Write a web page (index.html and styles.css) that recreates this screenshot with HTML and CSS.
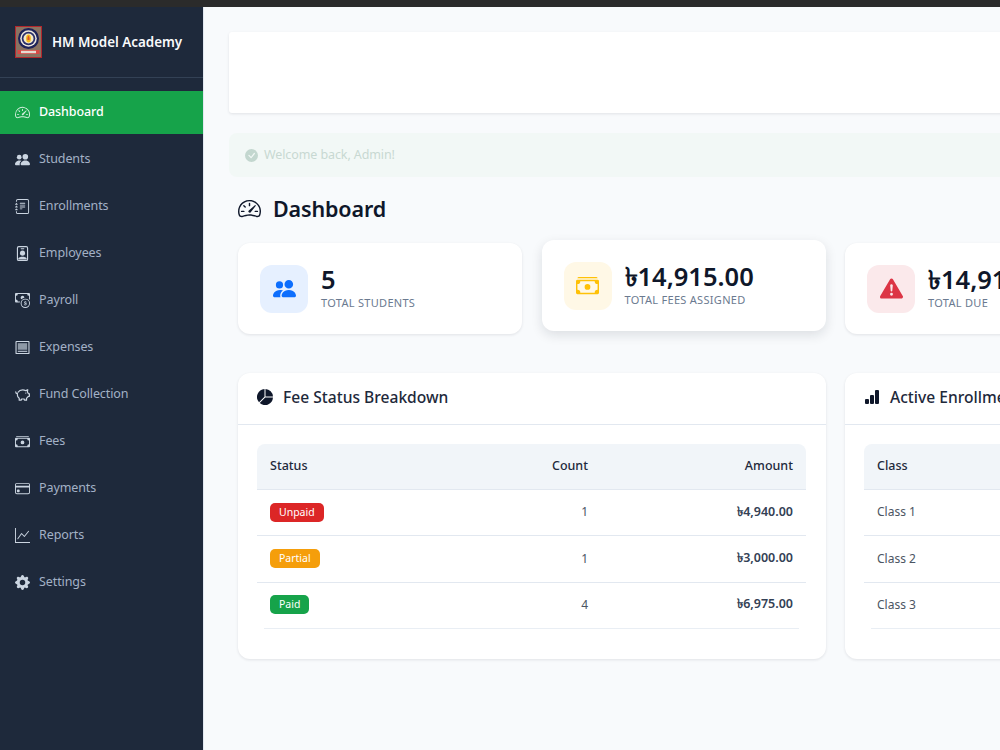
FILE: index.html
```html
<!DOCTYPE html>
<html lang="en">
<head>
<meta charset="utf-8">
<title>HM Model Academy</title>
<link rel="stylesheet" href="styles.css">
</head>
<body>
<svg class="defs" width="0" height="0" aria-hidden="true">
  <symbol id="i-speed" viewBox="0 0 16 16"><path d="M8 4a.5.5 0 0 1 .5.5V6a.5.5 0 0 1-1 0V4.5A.5.5 0 0 1 8 4zM3.732 5.732a.5.5 0 0 1 .707 0l.915.914a.5.5 0 1 1-.708.708l-.914-.915a.5.5 0 0 1 0-.707zM2 10a.5.5 0 0 1 .5-.5h1.586a.5.5 0 0 1 0 1H2.500A.5.5 0 0 1 2 10zm9.500 0a.5.5 0 0 1 .5-.5h1.500a.5.5 0 0 1 0 1H12a.5.5 0 0 1-.5-.5zm.754-4.246a.389.389 0 0 0-.527-.02L7.547 9.310a.91.91 0 1 0 1.302 1.258l3.434-4.297a.389.389 0 0 0-.029-.518z"/><path fill-rule="evenodd" d="M0 10a8 8 0 1 1 15.547 2.661c-.442 1.253-1.845 1.602-2.932 1.250C11.309 13.488 9.475 13 8 13c-1.474 0-3.310.488-4.615.911-1.087.352-2.490.003-2.932-1.250A7.988 7.988 0 0 1 0 10zm8-7a7 7 0 0 0-6.603 9.329c.203.575.923.876 1.680.630C4.397 12.533 6.358 12 8 12s3.604.532 4.923.960c.757.245 1.477-.056 1.680-.631A7 7 0 0 0 8 3z"/></symbol>
  <symbol id="i-people" viewBox="0 0 16 16"><path d="M7 14s-1 0-1-1 1-4 5-4 5 3 5 4-1 1-1 1H7zm4-6a3 3 0 1 0 0-6 3 3 0 0 0 0 6z"/><path d="M5.216 14A2.238 2.238 0 0 1 5 13c0-1.355.68-2.750 1.936-3.720A6.325 6.325 0 0 0 5 9c-4 0-5 3-5 4s1 1 1 1h4.216z"/><path d="M4.500 8a2.500 2.500 0 1 0 0-5 2.500 2.500 0 0 0 0 5z"/></symbol>
  <symbol id="i-journal" viewBox="0 0 16 16"><path d="M5 10.500a.5.5 0 0 1 .5-.5h2a.5.5 0 0 1 0 1h-2a.5.5 0 0 1-.5-.5zm0-2a.5.5 0 0 1 .5-.5h5a.5.5 0 0 1 0 1h-5a.5.5 0 0 1-.5-.5zm0-2a.5.5 0 0 1 .5-.5h5a.5.5 0 0 1 0 1h-5a.5.5 0 0 1-.5-.5zm0-2a.5.5 0 0 1 .5-.5h5a.5.5 0 0 1 0 1h-5a.5.5 0 0 1-.5-.5z"/><path d="M3 0h10a2 2 0 0 1 2 2v12a2 2 0 0 1-2 2H3a2 2 0 0 1-2-2v-1h1v1a1 1 0 0 0 1 1h10a1 1 0 0 0 1-1V2a1 1 0 0 0-1-1H3a1 1 0 0 0-1 1v1H1V2a2 2 0 0 1 2-2z"/><path d="M1 5v-.5a.5.5 0 0 1 1 0V5h.5a.5.5 0 0 1 0 1h-2a.5.5 0 0 1 0-1H1zm0 3v-.5a.5.5 0 0 1 1 0V8h.5a.5.5 0 0 1 0 1h-2a.5.5 0 0 1 0-1H1zm0 3v-.5a.5.5 0 0 1 1 0v.5h.5a.5.5 0 0 1 0 1h-2a.5.5 0 0 1 0-1H1z"/></symbol>
  <symbol id="i-badge" viewBox="0 0 16 16"><path fill-rule="evenodd" d="M4 0h8a2 2 0 0 1 2 2v12a2 2 0 0 1-2 2H4a2 2 0 0 1-2-2V2a2 2 0 0 1 2-2zm0 1.200a.8.8 0 0 0-.8.8v12a.8.8 0 0 0 .8.8h8a.8.8 0 0 0 .8-.8V2a.8.8 0 0 0-.8-.8H4z"/><rect x="6" y="2.300" width="4" height="1.100" rx=".5"/><circle cx="8" cy="7.600" r="2.700"/><path d="M3.500 13.200C4.400 12 6 11.500 8 11.500s3.600.5 4.500 1.700V14a.5.5 0 0 1-.5.5H4a.5.5 0 0 1-.5-.5v-.8z"/></symbol>
  <symbol id="i-coin" viewBox="0 0 16 16"><path fill-rule="evenodd" d="M11 15a4 4 0 1 0 0-8 4 4 0 0 0 0 8zm5-4a5 5 0 1 1-10 0 5 5 0 0 1 10 0z"/><path d="M9.438 11.944c.047.596.518 1.060 1.363 1.116v.44h.375v-.443c.875-.061 1.386-.529 1.386-1.207 0-.618-.39-.936-1.090-1.100l-.296-.07v-1.200c.376.043.614.248.671.532h.658c-.047-.575-.54-1.024-1.329-1.073V8.500h-.375v.45c-.747.073-1.255.522-1.255 1.158 0 .562.378.92 1.007 1.066l.248.061v1.272c-.384-.058-.639-.27-.696-.563h-.668zm1.360-1.354c-.369-.085-.569-.26-.569-.522 0-.294.216-.514.572-.578v1.100h-.003zm.432.746c.449.104.655.272.655.569 0 .339-.257.571-.709.614v-1.195l.054.012z"/><path d="M1 0a1 1 0 0 0-1 1v8a1 1 0 0 0 1 1h4.083c.058-.344.145-.678.258-1H3a2 2 0 0 0-2-2V3a2 2 0 0 0 2-2h10a2 2 0 0 0 2 2v3.528c.38.34.717.728 1 1.154V1a1 1 0 0 0-1-1H1z"/><path d="M9.998 5.083 10 5a2 2 0 1 0-3.132 1.650 5.982 5.982 0 0 1 3.130-1.567z"/></symbol>
  <symbol id="i-news" viewBox="0 0 16 16"><path fill-rule="evenodd" d="M1.500 1h13a1 1 0 0 1 1 1v12a1 1 0 0 1-1 1h-13a1 1 0 0 1-1-1V2a1 1 0 0 1 1-1zm.2 1.200v11.600h12.600V2.200H1.700z"/><rect x="3" y="3.400" width="10" height="7" opacity=".65"/><rect x="3" y="11.500" width="10" height="1.100"/></symbol>
  <symbol id="i-piggy" viewBox="0 0 16 16"><path fill="none" stroke="currentColor" stroke-width="1.300" stroke-linejoin="round" stroke-linecap="round" d="M3.200 5.600C4.300 3.900 6.200 3 8.200 3c1.300 0 2.300.3 3.200.9l2.200-1-.4 2.500c.5.5.8 1 1 1.600l1.200.3v2.500l-1.400.4c-.4.7-1 1.300-1.700 1.700V14h-2.200l-.3-1.200H7l-.3 1.200H4.500v-2c-1.300-1-2-2.300-2-3.800 0-.4 0-.8.1-1.200C1.500 7 .8 6.300.8 5.200"/><circle cx="11.500" cy="6.500" r=".7"/></symbol>
  <symbol id="i-cash" viewBox="0 0 16 16"><path d="M1 3a1 1 0 0 1 1-1h12a1 1 0 0 1 1 1H1zm7 8a2 2 0 1 0 0-4 2 2 0 0 0 0 4z"/><path fill-rule="evenodd" d="M0 5a1 1 0 0 1 1-1h14a1 1 0 0 1 1 1v8a1 1 0 0 1-1 1H1a1 1 0 0 1-1-1V5zm3 0a2 2 0 0 1-2 2v4a2 2 0 0 1 2 2h10a2 2 0 0 1 2-2V7a2 2 0 0 1-2-2H3z"/></symbol>
  <symbol id="i-card" viewBox="0 0 16 16"><path fill-rule="evenodd" d="M0 4a2 2 0 0 1 2-2h12a2 2 0 0 1 2 2v8a2 2 0 0 1-2 2H2a2 2 0 0 1-2-2V4zm2-1a1 1 0 0 0-1 1v1h14V4a1 1 0 0 0-1-1H2zm13 4H1v5a1 1 0 0 0 1 1h12a1 1 0 0 0 1-1V7z"/><path d="M2 10a1 1 0 0 1 1-1h1a1 1 0 0 1 1 1v1a1 1 0 0 1-1 1H3a1 1 0 0 1-1-1v-1z"/></symbol>
  <symbol id="i-graph" viewBox="0 0 16 16"><path d="M0 0h1v15h15v1H0V0Zm14.817 3.113a.5.5 0 0 1 .07.704l-4.500 5.500a.5.5 0 0 1-.74.037L7.060 6.767l-3.656 5.027a.5.5 0 0 1-.808-.588l4-5.500a.5.5 0 0 1 .758-.06l2.609 2.610 4.150-5.073a.5.5 0 0 1 .704-.07Z"/></symbol>
  <symbol id="i-gear" viewBox="0 0 16 16"><path d="M9.405 1.050c-.413-1.400-2.397-1.400-2.810 0l-.1.340a1.464 1.464 0 0 1-2.105.872l-.31-.17c-1.283-.698-2.686.705-1.987 1.987l.169.311c.446.820.023 1.841-.872 2.105l-.34.1c-1.400.413-1.400 2.397 0 2.810l.34.1a1.464 1.464 0 0 1 .872 2.105l-.17.310c-.698 1.283.705 2.686 1.987 1.987l.311-.169a1.464 1.464 0 0 1 2.105.872l.1.340c.413 1.400 2.397 1.400 2.810 0l.1-.340a1.464 1.464 0 0 1 2.105-.872l.310.170c1.283.698 2.686-.705 1.987-1.987l-.169-.311a1.464 1.464 0 0 1 .872-2.105l.340-.1c1.400-.413 1.400-2.397 0-2.810l-.340-.1a1.464 1.464 0 0 1-.872-2.105l.170-.310c.698-1.283-.705-2.686-1.987-1.987l-.311.169a1.464 1.464 0 0 1-2.105-.872l-.1-.340zM8 10.930a2.929 2.929 0 1 1 0-5.860 2.929 2.929 0 0 1 0 5.858z"/></symbol>
  <symbol id="i-check" viewBox="0 0 16 16"><path d="M16 8A8 8 0 1 1 0 8a8 8 0 0 1 16 0zm-3.970-3.030a.75.75 0 0 0-1.080.022L7.477 9.417 5.384 7.323a.75.75 0 0 0-1.060 1.060L6.970 11.030a.75.75 0 0 0 1.079-.02l3.992-4.990a.75.75 0 0 0-.01-1.050z"/></symbol>
  <symbol id="i-warn" viewBox="0 0 16 16"><path d="M8.982 1.566a1.130 1.130 0 0 0-1.960 0L.165 13.233c-.457.778.091 1.767.980 1.767h13.713c.889 0 1.438-.990.980-1.767L8.982 1.566zM8 5c.535 0 .954.462.900.995l-.350 3.507a.552.552 0 0 1-1.100 0L7.100 5.995A.905.905 0 0 1 8 5zm.002 6a1 1 0 1 1 0 2 1 1 0 0 1 0-2z"/></symbol>
  <symbol id="i-pie" viewBox="0 0 16 16"><path d="M15.985 8.500H8.207l-5.500 5.500a8 8 0 0 0 13.277-5.500zM2 13.292A8 8 0 0 1 7.500.015v7.778l-5.500 5.500zM8.500.015V7.500h7.485A8.001 8.001 0 0 0 8.500.015z"/></symbol>
  <symbol id="i-bars" viewBox="0 0 16 16"><path d="M1 11a1 1 0 0 1 1-1h2a1 1 0 0 1 1 1v3a1 1 0 0 1-1 1H2a1 1 0 0 1-1-1v-3zm5-4a1 1 0 0 1 1-1h2a1 1 0 0 1 1 1v7a1 1 0 0 1-1 1H7a1 1 0 0 1-1-1V7zm5-5a1 1 0 0 1 1-1h2a1 1 0 0 1 1 1v12a1 1 0 0 1-1 1h-2a1 1 0 0 1-1-1V2z"/></symbol>
</svg>

<div class="strip"></div>
<div class="app">
  <aside class="sidebar">
    <div class="brand">
      <svg class="logo" viewBox="0 0 27 32" aria-hidden="true">
        <rect x=".5" y=".5" width="26" height="31" fill="#8a7362" stroke="#b3262c"/>
        <circle cx="13.500" cy="12.500" r="10.500" fill="#1d2258"/>
        <circle cx="13.500" cy="12.500" r="8.300" fill="#ece6de"/>
        <circle cx="13.500" cy="12.500" r="6.800" fill="#2a2f6b"/>
        <circle cx="13.500" cy="12.500" r="5" fill="#f3e9c9"/>
        <ellipse cx="13.500" cy="12.500" rx="2.400" ry="4" fill="#f6b81c"/>
        <path d="M13.500 9.500c1 1.500 1.300 2.800 1 4.500h-2c-.3-1.700 0-3 1-4.500z" fill="#e0512a"/>
        <rect x="2.500" y="24" width="22" height="4" fill="#d84a45"/>
        <rect x="6" y="24.800" width="15" height="2.400" fill="#e6dcd2"/>
      </svg>
      <span class="brand-name">HM Model Academy</span>
    </div>
    <nav class="nav">
      <a class="nav-item active"><svg class="nav-icon"><use href="#i-speed"/></svg><span class="nav-label">Dashboard</span></a>
      <a class="nav-item"><svg class="nav-icon"><use href="#i-people"/></svg><span class="nav-label">Students</span></a>
      <a class="nav-item"><svg class="nav-icon"><use href="#i-journal"/></svg><span class="nav-label">Enrollments</span></a>
      <a class="nav-item"><svg class="nav-icon"><use href="#i-badge"/></svg><span class="nav-label">Employees</span></a>
      <a class="nav-item"><svg class="nav-icon"><use href="#i-coin"/></svg><span class="nav-label">Payroll</span></a>
      <a class="nav-item"><svg class="nav-icon"><use href="#i-news"/></svg><span class="nav-label">Expenses</span></a>
      <a class="nav-item"><svg class="nav-icon"><use href="#i-piggy"/></svg><span class="nav-label">Fund Collection</span></a>
      <a class="nav-item"><svg class="nav-icon"><use href="#i-cash"/></svg><span class="nav-label">Fees</span></a>
      <a class="nav-item"><svg class="nav-icon"><use href="#i-card"/></svg><span class="nav-label">Payments</span></a>
      <a class="nav-item"><svg class="nav-icon"><use href="#i-graph"/></svg><span class="nav-label">Reports</span></a>
      <a class="nav-item"><svg class="nav-icon"><use href="#i-gear"/></svg><span class="nav-label">Settings</span></a>
    </nav>
  </aside>

  <main class="main">
    <div class="top-card"></div>
    <div class="alert">
      <svg class="alert-icon"><use href="#i-check"/></svg>
      <span class="alert-text">Welcome back, Admin!</span>
    </div>
    <div class="page">
      <h1 class="page-title"><svg class="title-icon"><use href="#i-speed"/></svg>Dashboard</h1>
      <div class="stats">
        <div class="stat">
          <div class="stat-icon blue"><svg><use href="#i-people"/></svg></div>
          <div class="stat-text"><div class="stat-value">5</div><div class="stat-label">Total Students</div></div>
        </div>
        <div class="stat raised">
          <div class="stat-icon yellow"><svg><use href="#i-cash"/></svg></div>
          <div class="stat-text"><div class="stat-value">৳14,915.00</div><div class="stat-label">Total Fees Assigned</div></div>
        </div>
        <div class="stat">
          <div class="stat-icon red"><svg><use href="#i-warn"/></svg></div>
          <div class="stat-text"><div class="stat-value">৳14,915.00</div><div class="stat-label">Total Due</div></div>
        </div>
      </div>
      <div class="panels">
        <section class="panel">
          <h2 class="panel-head"><svg><use href="#i-pie"/></svg>Fee Status Breakdown</h2>
          <div class="panel-body">
            <table class="data">
              <thead><tr><th class="c-status">Status</th><th class="c-count num">Count</th><th class="num">Amount</th></tr></thead>
              <tbody>
                <tr><td><span class="tag tag-red">Unpaid</span></td><td class="num">1</td><td class="num money">৳4,940.00</td></tr>
                <tr><td><span class="tag tag-amber">Partial</span></td><td class="num">1</td><td class="num money">৳3,000.00</td></tr>
                <tr><td><span class="tag tag-green">Paid</span></td><td class="num">4</td><td class="num money">৳6,975.00</td></tr>
              </tbody>
            </table>
            <div class="table-end"></div>
          </div>
        </section>
        <section class="panel">
          <h2 class="panel-head"><svg><use href="#i-bars"/></svg>Active Enrollments by Class</h2>
          <div class="panel-body">
            <table class="data">
              <thead><tr><th>Class</th></tr></thead>
              <tbody>
                <tr><td>Class 1</td></tr>
                <tr><td>Class 2</td></tr>
                <tr><td>Class 3</td></tr>
              </tbody>
            </table>
            <div class="table-end"></div>
          </div>
        </section>
      </div>
    </div>
  </main>
</div>
</body>
</html>
```
FILE: styles.css
```css
* { box-sizing: border-box; }
html, body { margin: 0; height: 100%; }
body {
  display: flex;
  flex-direction: column;
  height: 750px;
  overflow: hidden;
  background: #f8fafc;
  font-family: "Noto Sans", "DejaVu Sans", sans-serif;
  color: #1e293b;
}
.defs { position: absolute; }
.strip { height: 7px; flex: none; background: #2b2b2b; }
.app { display: flex; flex: 1; min-height: 0; }

.sidebar { width: 204px; flex: none; background: #1e293b; border-right: 1px solid #e2e8f0; }
.brand {
  height: 71px;
  display: flex;
  align-items: center;
  gap: 10px;
  padding-left: 15px;
  border-bottom: 1px solid #334155;
}
.logo { width: 27px; height: 32px; flex: none; }
.brand-name { color: #f8fafc; font-size: 13.400px; font-weight: 600; white-space: nowrap; padding-bottom: 1px; }
.nav { display: flex; flex-direction: column; gap: 4px; padding-top: 13px; }
.nav-item {
  height: 43px;
  display: flex;
  align-items: center;
  gap: 9px;
  padding-left: 15px;
  color: #a3b1c6;
  font-size: 12.500px;
  letter-spacing: -.1px;
}
.nav-item.active { background: #16a34a; color: #fff; font-weight: 500; }
.nav-label { padding-bottom: 3px; }
.nav-icon { width: 15px; height: 15px; fill: #cbd5e1; color: #cbd5e1; flex: none; }
.active .nav-icon { fill: #d5efdf; color: #d5efdf; }

.main { flex: 1; min-width: 0; padding: 25px 0 0 25px; overflow: hidden; }
.top-card {
  width: 1300px;
  height: 81px;
  background: #fff;
  box-shadow: 0 1px 3px rgba(15, 23, 42, .1);
  border-radius: 3px;
}
.alert {
  width: 1300px;
  height: 44px;
  margin-top: 20px;
  padding-left: 16px;
  display: flex;
  align-items: center;
  gap: 6px;
  background: #f2f8f6;
  border-radius: 8px;
  color: #c8d8d2;
  font-size: 12.500px;
  letter-spacing: -.1px;
}
.alert-text { padding-bottom: 2px; }
.alert-icon { width: 13px; height: 13px; fill: #c3d7cf; }
.page { padding: 0 0 0 9px; width: 1300px; }
.page-title {
  margin: 17px 0 0;
  height: 28px;
  display: flex;
  align-items: center;
  gap: 12px;
  font-size: 21.500px;
  font-weight: 600;
  letter-spacing: -.15px;
  color: #0f172a;
}
.title-icon { width: 23px; height: 23px; fill: #0f172a; }

.stats { display: grid; grid-template-columns: repeat(4, 284px); gap: 19.500px; margin-top: 21px; }
.stat {
  height: 91px;
  display: flex;
  align-items: center;
  gap: 13px;
  padding-left: 22px;
  background: #fff;
  border-radius: 12px;
  box-shadow: 0 1px 3px rgba(15, 23, 42, .1);
}
.stat.raised { transform: translateY(-3px); box-shadow: 0 4px 12px rgba(15, 23, 42, .12); }
.stat-icon {
  width: 48px;
  height: 48px;
  flex: none;
  display: flex;
  align-items: center;
  justify-content: center;
  border-radius: 12px;
}
.stat-icon svg { width: 23px; height: 23px; fill: currentColor; }
.blue { background: #e6f0ff; color: #0d6efd; }
.yellow { background: #fff8e6; color: #ffc107; }
.red { background: #fbe9eb; color: #dc3545; }
.stat-text { padding-bottom: 4px; }
.stat-value { font-size: 25.500px; font-weight: 600; line-height: 30px; color: #0f172a; }
.stat-label { margin-top: 2px; font-size: 11px; line-height: 14px; letter-spacing: .3px; text-transform: uppercase; color: #6b7a90; }

.panels { display: grid; grid-template-columns: repeat(2, 588px); gap: 19px; margin-top: 39px; }
.panel { height: 286px; background: #fff; border-radius: 12px; box-shadow: 0 1px 3px rgba(15, 23, 42, .1); }
.panel-head {
  margin: 0;
  height: 52px;
  display: flex;
  align-items: center;
  gap: 10px;
  padding: 0 0 4px 19px;
  border-bottom: 1px solid #e2e8f0;
  font-size: 15.600px;
  font-weight: 500;
  color: #1e293b;
}
.panel-head svg { width: 16px; height: 16px; fill: #0f172a; flex: none; }
.panel-body { padding: 19px 20px 0 19px; }
.data { width: 100%; border-collapse: separate; border-spacing: 0; table-layout: fixed; font-size: 12px; }
.data th {
  height: 46px;
  padding: 0 13px 2px;
  background: #f1f5f9;
  border-bottom: 1px solid #e2e8f0;
  text-align: left;
  font-size: 12.500px;
  font-weight: 500;
  color: #1e293b;
}
.data th:first-child { border-top-left-radius: 8px; }
.data th:last-child { border-top-right-radius: 8px; }
.c-status { width: 260px; }
.c-count { width: 84px; }
.data td { height: 46.400px; padding: 0 13px 2px; border-bottom: 1px solid #e2e8f0; color: #4b5563; }
.data tbody tr:last-child td { border-bottom: 0; height: 45px; }
.data .num { text-align: right; }
.data .money { padding-bottom: 0; font-size: 12.500px; font-weight: 600; color: #334155; }
.table-end { height: 1px; margin: 0 7px; background: #e9eef4; }
.tag {
  display: inline-block;
  height: 19px;
  margin-top: 1px;
  padding: 0 9px;
  border-radius: 5px;
  color: #fff;
  font-size: 10.500px;
  font-weight: 400;
  line-height: 19px;
  vertical-align: middle;
}
.tag-red { background: #dc2626; }
.tag-amber { background: #f59e0b; }
.tag-green { background: #16a34a; }
```
